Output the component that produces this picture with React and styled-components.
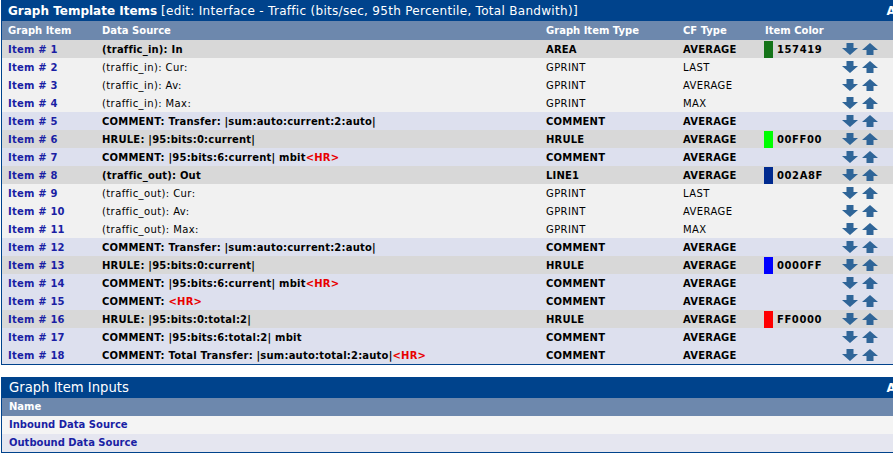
import styled, { createGlobalStyle } from 'styled-components';

const GlobalStyle = createGlobalStyle`
  html, body {
    margin: 0;
    padding: 0;
    overflow: hidden;
    background: #ffffff;
  }
  body {
    font-family: "DejaVu Sans", Verdana, sans-serif;
    font-size: 10px;
  }
`;

const Page = styled.div`
  width: 918px;
  padding-left: 1px;
  display: flex;
  flex-direction: column;
  gap: 12px;
`;

const Box = styled.div`
  border: 1px solid #00438c;
  border-top: none;
  background: #f2f2f2;
`;

const TitleBar = styled.div`
  display: flex;
  justify-content: space-between;
  align-items: center;
  height: 21px;
  padding: 0 5px 0 ${(p) => p.$indent || 6}px;
  background: #00438c;
  color: #ffffff;
  font-size: ${(p) => p.$size || 12}px;
  white-space: nowrap;
`;

const TitleMain = styled.span`
  font-weight: bold;
`;

const TitleNote = styled.span`
  letter-spacing: 0.3px;
`;

const AddLink = styled.span`
  font-weight: bold;
  font-size: 12px;
`;

const cols = '94px 444px 137px 82px 77px 1fr';

const HeadRow = styled.div`
  display: grid;
  grid-template-columns: ${cols};
  height: 19px;
  align-items: center;
  background: #6d88ad;
  color: #ffffff;
  font-weight: bold;
  & > span {
    padding-left: 6px;
  }
`;

const rowBg = {
  graph: '#d8d8d8',
  gprint: '#f1f1f1',
  comment: '#dde0ee',
};

const Row = styled.div`
  display: grid;
  grid-template-columns: ${cols};
  height: 18px;
  align-items: center;
  background: ${(p) => rowBg[p.$kind]};
  color: #000000;
  font-weight: ${(p) => (p.$kind === 'gprint' ? 'normal' : 'bold')};
  letter-spacing: ${(p) => (p.$kind === 'gprint' ? '0.4px' : '0.2px')};
  white-space: nowrap;
`;

const Cell = styled.span`
  padding-left: 6px;
`;

const ItemLink = styled(Cell)`
  color: #1a1fa4;
  font-weight: bold;
  letter-spacing: 0.2px;
`;

const Hr = styled.span`
  color: #e80000;
`;

const ColorCell = styled.span`
  display: flex;
  align-items: center;
  height: 18px;
  padding-left: 5px;
  gap: 4px;
  font-weight: bold;
  letter-spacing: 0.6px;
`;

const Swatch = styled.span`
  width: 9px;
  height: 17px;
  background: #${(p) => p.$hex};
`;

const Arrows = styled.span`
  display: flex;
  align-items: center;
  gap: 4px;
  padding-left: 6px;
`;

const ArrowIcon = ({ up }) => (
  <svg width="16" height="12" viewBox="0 0 16 12">
    <polygon
      fill="#2f6598"
      points={
        up
          ? '8,0 16,7 11.5,7 11.5,12 4.5,12 4.5,7 0,7'
          : '4.5,0 11.5,0 11.5,5 16,5 8,12 0,5 4.5,5'
      }
    />
  </svg>
);

const items = [
  { ds: '(traffic_in): In', type: 'AREA', cf: 'AVERAGE', color: '157419', kind: 'graph' },
  { ds: '(traffic_in): Cur:', type: 'GPRINT', cf: 'LAST', kind: 'gprint' },
  { ds: '(traffic_in): Av:', type: 'GPRINT', cf: 'AVERAGE', kind: 'gprint' },
  { ds: '(traffic_in): Max:', type: 'GPRINT', cf: 'MAX', kind: 'gprint' },
  { ds: 'COMMENT: Transfer: |sum:auto:current:2:auto|', type: 'COMMENT', cf: 'AVERAGE', kind: 'comment' },
  { ds: 'HRULE: |95:bits:0:current|', type: 'HRULE', cf: 'AVERAGE', color: '00FF00', kind: 'graph' },
  { ds: 'COMMENT: |95:bits:6:current| mbit', hr: true, type: 'COMMENT', cf: 'AVERAGE', kind: 'comment' },
  { ds: '(traffic_out): Out', type: 'LINE1', cf: 'AVERAGE', color: '002A8F', kind: 'graph' },
  { ds: '(traffic_out): Cur:', type: 'GPRINT', cf: 'LAST', kind: 'gprint' },
  { ds: '(traffic_out): Av:', type: 'GPRINT', cf: 'AVERAGE', kind: 'gprint' },
  { ds: '(traffic_out): Max:', type: 'GPRINT', cf: 'MAX', kind: 'gprint' },
  { ds: 'COMMENT: Transfer: |sum:auto:current:2:auto|', type: 'COMMENT', cf: 'AVERAGE', kind: 'comment' },
  { ds: 'HRULE: |95:bits:0:current|', type: 'HRULE', cf: 'AVERAGE', color: '0000FF', kind: 'graph' },
  { ds: 'COMMENT: |95:bits:6:current| mbit', hr: true, type: 'COMMENT', cf: 'AVERAGE', kind: 'comment' },
  { ds: 'COMMENT: ', hr: true, type: 'COMMENT', cf: 'AVERAGE', kind: 'comment' },
  { ds: 'HRULE: |95:bits:0:total:2|', type: 'HRULE', cf: 'AVERAGE', color: 'FF0000', kind: 'graph' },
  { ds: 'COMMENT: |95:bits:6:total:2| mbit', type: 'COMMENT', cf: 'AVERAGE', kind: 'comment' },
  { ds: 'COMMENT: Total Transfer: |sum:auto:total:2:auto|', hr: true, type: 'COMMENT', cf: 'AVERAGE', kind: 'comment' },
];

const InputsHead = styled.div`
  height: 18px;
  line-height: 18px;
  padding-left: 7px;
  background: #6d88ad;
  color: #ffffff;
  font-weight: bold;
  font-size: 10px;
`;

const InputRow = styled.div`
  height: 18px;
  line-height: 18px;
  padding-left: 7px;
  background: ${(p) => (p.$alt ? '#e5e6f0' : '#f4f4f4')};
  color: #1a1fa4;
  font-weight: bold;
  font-size: 10px;
`;

export default function App() {
  return (
    <>
      <GlobalStyle />
      <Page>
        <Box>
          <TitleBar>
            <span>
              <TitleMain>Graph Template Items</TitleMain>{' '}
              <TitleNote>
                [edit: Interface - Traffic (bits/sec, 95th Percentile, Total Bandwith)]
              </TitleNote>
            </span>
            <AddLink>Add</AddLink>
          </TitleBar>
          <HeadRow>
            <span>Graph Item</span>
            <span>Data Source</span>
            <span>Graph Item Type</span>
            <span>CF Type</span>
            <span>Item Color</span>
            <span />
          </HeadRow>
          {items.map((it, i) => (
            <Row key={i} $kind={it.kind}>
              <ItemLink>Item # {i + 1}</ItemLink>
              <Cell>
                {it.ds}
                {it.hr && <Hr>&lt;HR&gt;</Hr>}
              </Cell>
              <Cell>{it.type}</Cell>
              <Cell>{it.cf}</Cell>
              <ColorCell>
                {it.color && (
                  <>
                    <Swatch $hex={it.color} />
                    {it.color}
                  </>
                )}
              </ColorCell>
              <Arrows>
                <ArrowIcon />
                <ArrowIcon up />
              </Arrows>
            </Row>
          ))}
        </Box>
        <Box>
          <TitleBar $indent={7} $size={13.2}>
            <span>Graph Item Inputs</span>
            <AddLink>Add</AddLink>
          </TitleBar>
          <InputsHead>Name</InputsHead>
          <InputRow>Inbound Data Source</InputRow>
          <InputRow $alt>Outbound Data Source</InputRow>
        </Box>
      </Page>
    </>
  );
}
